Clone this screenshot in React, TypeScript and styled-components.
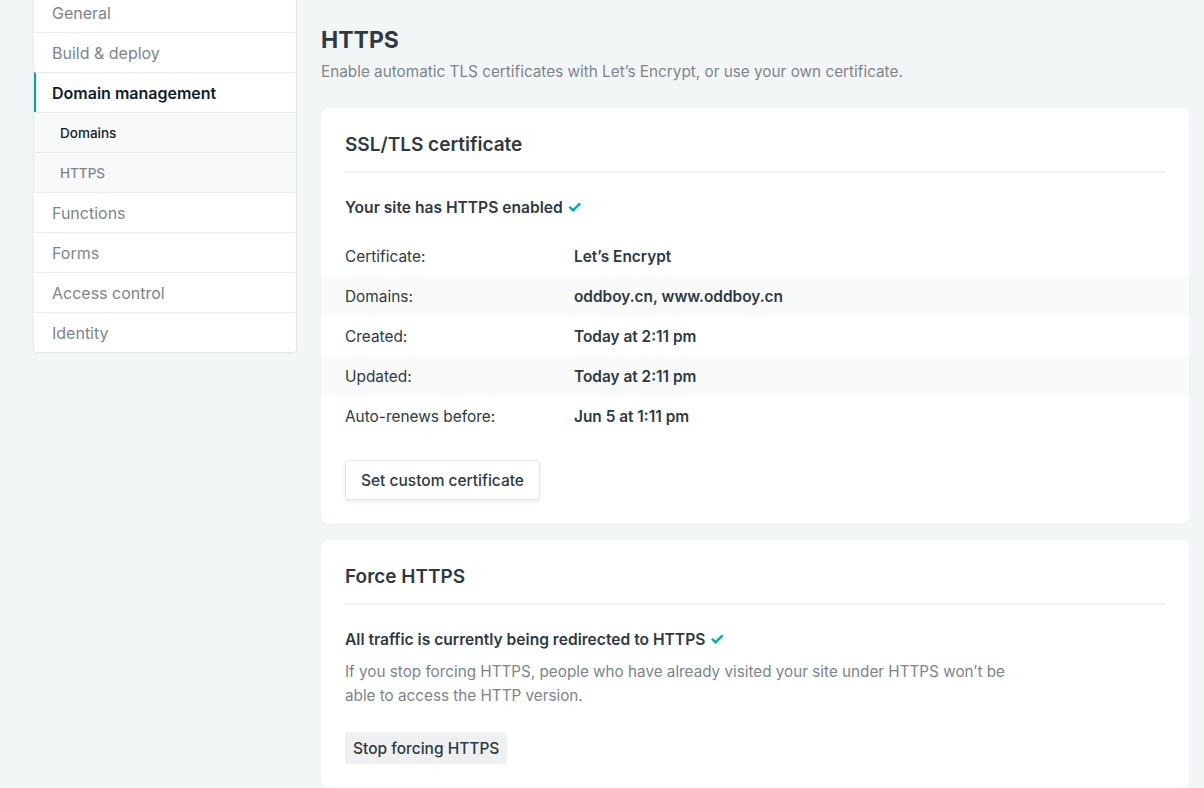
import React from 'react';
import styled, { createGlobalStyle } from 'styled-components';

const GlobalStyle = createGlobalStyle`
  html, body {
    margin: 0;
    padding: 0;
    background: #f3f6f6;
  }
  body {
    font-family: Inter, "Liberation Sans", Arial, sans-serif;
    color: #2e3a40;
    -webkit-font-smoothing: antialiased;
  }
  * {
    box-sizing: border-box;
  }
`;

const navItems = [
  { label: 'General' },
  { label: 'Build & deploy' },
  { label: 'Domain management', active: true },
  { label: 'Domains', sub: true, current: true },
  { label: 'HTTPS', sub: true },
  { label: 'Functions' },
  { label: 'Forms' },
  { label: 'Access control' },
  { label: 'Identity' },
];

const certRows = [
  { label: 'Certificate:', value: 'Let’s Encrypt' },
  { label: 'Domains:', value: 'oddboy.cn, www.oddboy.cn' },
  { label: 'Created:', value: 'Today at 2:11 pm' },
  { label: 'Updated:', value: 'Today at 2:11 pm' },
  { label: 'Auto-renews before:', value: 'Jun 5 at 1:11 pm' },
];

const App: React.FC = () => {
  return (
    <>
      <GlobalStyle />
      <PageStyled>
        <SidebarStyled>
          {navItems.map((item) => (
            <NavItemStyled
              key={item.label}
              active={item.active}
              sub={item.sub}
              current={item.current}
            >
              {item.label}
            </NavItemStyled>
          ))}
        </SidebarStyled>

        <MainStyled>
          <PageTitleStyled>HTTPS</PageTitleStyled>
          <PageSubtitleStyled>
            Enable automatic TLS certificates with Let’s Encrypt, or use your own certificate.
          </PageSubtitleStyled>

          <CardStyled>
            <CardTitleStyled>SSL/TLS certificate</CardTitleStyled>
            <StatusStyled>
              Your site has HTTPS enabled <CheckStyled>✓</CheckStyled>
            </StatusStyled>
            <RowsStyled>
              {certRows.map((row, i) => (
                <RowStyled key={row.label} striped={i % 2 === 1}>
                  <RowLabelStyled>{row.label}</RowLabelStyled>
                  <RowValueStyled>{row.value}</RowValueStyled>
                </RowStyled>
              ))}
            </RowsStyled>
            <ButtonStyled>Set custom certificate</ButtonStyled>
          </CardStyled>

          <CardStyled>
            <CardTitleStyled>Force HTTPS</CardTitleStyled>
            <StatusStyled>
              All traffic is currently being redirected to HTTPS <CheckStyled>✓</CheckStyled>
            </StatusStyled>
            <DescriptionStyled>
              If you stop forcing HTTPS, people who have already visited your site under HTTPS won’t be
              able to access the HTTP version.
            </DescriptionStyled>
            <ButtonStyled subtle>Stop forcing HTTPS</ButtonStyled>
          </CardStyled>
        </MainStyled>
      </PageStyled>
    </>
  );
};

const PageStyled = styled.div`
  display: flex;
  align-items: flex-start;
  gap: 24px;
  padding: 0 15px 0 33px;
`;

const SidebarStyled = styled.nav`
  width: 264px;
  flex-shrink: 0;
  margin-top: -8px;
  background: #fff;
  border: 1px solid #e6e9ea;
  border-top: none;
  border-radius: 0 0 4px 4px;
  overflow: hidden;
  box-shadow: 0 1px 2px rgba(0, 0, 0, 0.03);
`;

const NavItemStyled = styled.div<{ active?: boolean; sub?: boolean; current?: boolean }>`
  height: 40px;
  display: flex;
  align-items: center;
  border-top: 1px solid #e9ecec;
  padding-left: ${({ sub, active }) => (sub ? '26px' : active ? '16px' : '18px')};
  border-left: ${({ active }) => (active ? '2px solid #00ad9f' : 'none')};
  background: ${({ sub }) => (sub ? '#f8f9f9' : '#fff')};
  font-size: ${({ sub }) => (sub ? '13.5px' : '16px')};
  font-weight: ${({ active, sub }) => (active ? 600 : sub ? 500 : 400)};
  color: ${({ active, current }) => (active || current ? '#0e1e25' : '#7d8589')};
  padding-top: 1px;
`;

const MainStyled = styled.main`
  flex: 1;
  padding-top: 24px;
  display: flex;
  flex-direction: column;
`;

const PageTitleStyled = styled.h1`
  margin: 0;
  font-size: 23px;
  line-height: 32px;
  font-weight: 700;
  color: #2e3a40;
`;

const PageSubtitleStyled = styled.p`
  margin: 4px 0 24px;
  font-size: 15.3px;
  line-height: 24px;
  color: #7d8589;
`;

const CardStyled = styled.section`
  background: #fff;
  border-radius: 8px;
  padding: 24px;
  margin-bottom: 16px;
  box-shadow: 0 1px 2px rgba(0, 0, 0, 0.04);
`;

const CardTitleStyled = styled.h2`
  margin: 0 0 23px;
  font-size: 19px;
  line-height: 24px;
  font-weight: 600;
  color: #2e3a40;
  padding: 1px 0 14px;
  border-bottom: 2px solid #eff1f2;
`;

const StatusStyled = styled.div`
  font-size: 15.6px;
  line-height: 24px;
  height: 24px;
  font-weight: 600;
  color: #2e3a40;
`;

const CheckStyled = styled.span`
  color: #00ad9f;
  font-weight: 700;
  font-size: 17px;
  line-height: 0;
`;

const RowsStyled = styled.div`
  margin: 16px -24px 24px;
`;

const RowStyled = styled.div<{ striped?: boolean }>`
  display: grid;
  grid-template-columns: 229px 1fr;
  align-items: center;
  height: 40px;
  padding: 0 24px;
  background: ${({ striped }) => (striped ? '#f9fafa' : 'transparent')};
  font-size: 15.4px;
`;

const RowLabelStyled = styled.div`
  color: #2e3a40;
`;

const RowValueStyled = styled.div`
  font-weight: 600;
  color: #2e3a40;
`;

const DescriptionStyled = styled.p`
  margin: 8px 0 24px;
  max-width: 680px;
  font-size: 15.25px;
  line-height: 24px;
  color: #7d8589;
`;

const ButtonStyled = styled.button<{ subtle?: boolean }>`
  align-self: flex-start;
  display: inline-flex;
  align-items: center;
  height: ${({ subtle }) => (subtle ? '32px' : '40px')};
  padding: 0 ${({ subtle }) => (subtle ? '8px' : '15px')};
  font-family: inherit;
  font-size: 15.5px;
  font-weight: 500;
  color: #2e3a40;
  background: ${({ subtle }) => (subtle ? '#eef0f1' : '#fff')};
  border: ${({ subtle }) => (subtle ? 'none' : '1px solid #e4e7e8')};
  border-radius: 4px;
  box-shadow: ${({ subtle }) => (subtle ? 'none' : '0 2px 4px rgba(0, 0, 0, 0.08)')};
  cursor: pointer;
`;

export default App;
